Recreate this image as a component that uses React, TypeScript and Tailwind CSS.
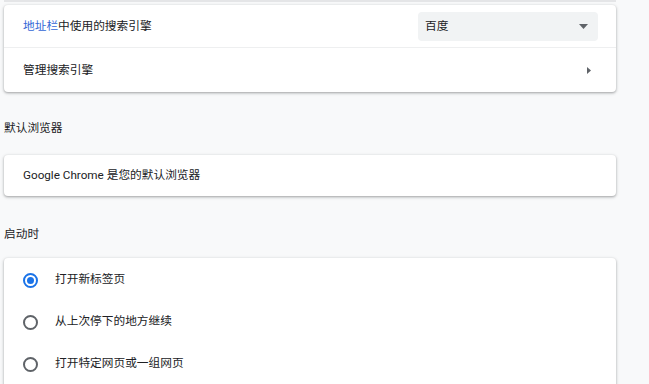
import React from "react";

const font = { fontFamily: 'Roboto, "Noto Sans CJK SC", "Liberation Sans", sans-serif' };

function Card({ children, className = "" }: { children: React.ReactNode; className?: string }) {
  return (
    <div
      className={`w-[612px] bg-white rounded-[4px] shadow-[0_1px_2px_0_rgba(60,64,67,0.3),0_1px_3px_1px_rgba(60,64,67,0.15)] ${className}`}
    >
      {children}
    </div>
  );
}

function Radio({ checked }: { checked?: boolean }) {
  return (
    <span
      className={`w-[15px] h-[15px] rounded-full border-2 flex items-center justify-center ${checked ? "border-[#1a73e8]" : "border-[#5f6368]"}`}
    >
      {checked && <span className="w-[7px] h-[7px] rounded-full bg-[#1a73e8]" />}
    </span>
  );
}

export default function App() {
  const startup = [
    { label: "打开新标签页", checked: true },
    { label: "从上次停下的地方继续" },
    { label: "打开特定网页或一组网页" },
  ];

  return (
    <div className="w-[649px] h-[384px] overflow-hidden bg-[#f8f9fa] text-[11.7px] text-[#202124]" style={font}>
      <div className="ml-[4px] w-[612px] h-[2px] bg-[#e4e5e7]" />

      <div className="pl-[4px] pt-[3px]">
        <Card>
          <div className="h-[43px] flex items-center pl-[19px] pr-[18px] pt-[1px] border-b border-[#eeeff0]">
            <span className="flex-1">
              <span className="text-[#3367d6]">地址栏</span>中使用的搜索引擎
            </span>
            <div className="w-[180px] h-[29px] rounded-[4px] bg-[#f1f3f4] flex items-center pl-[7px] pr-[10px]">
              <span className="flex-1">百度</span>
              <svg width="9" height="5" viewBox="0 0 9 5">
                <path d="M0 0 L9 0 L4.5 5 Z" fill="#5f6368" />
              </svg>
            </div>
          </div>
          <div className="h-[44px] flex items-center pl-[19px] pr-[25px] pt-[1px]">
            <span className="flex-1">管理搜索引擎</span>
            <svg width="4" height="7" viewBox="0 0 4 7">
              <path d="M0 0 L4 3.5 L0 7 Z" fill="#5f6368" />
            </svg>
          </div>
        </Card>

        <div className="pt-[28px] pb-[19px] leading-[16px]">默认浏览器</div>

        <Card>
          <div className="h-[41px] flex items-center pl-[19px] pt-[1px]">Google Chrome 是您的默认浏览器</div>
        </Card>

        <div className="pt-[30px] pb-[16px] leading-[16px]">启动时</div>

        <Card className="pt-[1px] pb-[20px]">
          {startup.map((s) => (
            <div key={s.label} className="h-[42px] flex items-center pl-[19px] gap-[17px]">
              <Radio checked={s.checked} />
              <span>{s.label}</span>
            </div>
          ))}
        </Card>
      </div>
    </div>
  );
}
